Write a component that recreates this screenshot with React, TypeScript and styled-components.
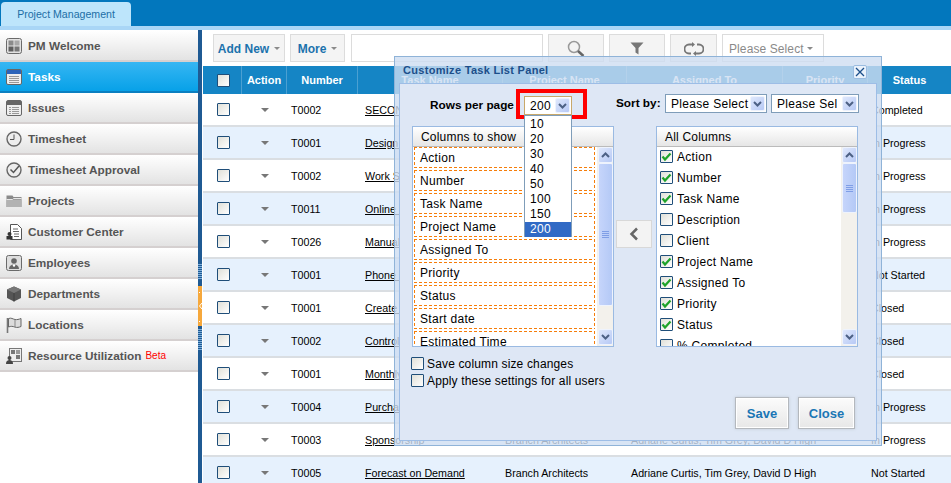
import React from "react";
import styled, { createGlobalStyle } from "styled-components";

const Global = createGlobalStyle`
  html, body { margin: 0; padding: 0; background: #fff; overflow: hidden; }
  body { font-family: "Liberation Sans", Arial, sans-serif; font-size: 11px; color: #000; }
  * { box-sizing: border-box; }
`;

const Page = styled.div`position: relative; width: 951px; height: 483px; overflow: hidden; display: flex; flex-direction: column;`;
const TopBar = styled.header`height: 30px; flex: none; background: #0277bd; border-bottom: 4px solid #a9d6f6; padding: 2px 0 0 1px;`;
const TopTab = styled.div`width: 130px; height: 24px; background: #bde5fb; border-radius: 4px 4px 0 0; color: #1c6ea6; font-size: 10.6px; display: flex; align-items: center; justify-content: center;`;
const Body = styled.div`flex: 1; display: flex; min-height: 0;`;

const Sidebar = styled.nav`width: 198px; flex: none; padding-top: 1px; display: flex; flex-direction: column;`;
const NavItem = styled.div<{ $active?: boolean }>`
  height: 31px; flex: none; display: flex; align-items: center; gap: 6px; padding: 0 0 0 6px;
  font-size: 11.8px; font-weight: bold;
  color: ${p => (p.$active ? "#fff" : "#555")};
  background: ${p => (p.$active ? "linear-gradient(#36b6f3,#07a1e8)" : "linear-gradient(#fff,#e3e3e3)")};
  border-bottom: 2px solid ${p => (p.$active ? "#0b7fc0" : "#d5d0d0")};
  svg { flex: none; }
`;
const Beta = styled.span`color: #f00; font-weight: normal; font-size: 10px; margin-left: -2px;`;

const Splitter = styled.div`width: 4px; flex: none; background: #1f5a93; display: flex; flex-direction: column; align-items: center; margin-right: 1px;`;
const SplitGrip = styled.div<{ $top: number; $h: number }>`width: 4px; height: ${p => p.$h}px; margin-top: ${p => p.$top}px; background: repeating-linear-gradient(#1f5a93 0 1px, #7fb0dc 1px 2px);`;
const SplitHandle = styled.div`width: 4px; height: 40px; margin-top: 7px; background: #f6a83c; display: flex;`;

const Main = styled.main`flex: 1; min-width: 0; display: flex; flex-direction: column;`;
const Toolbar = styled.div`height: 36px; flex: none; display: flex; padding: 4px 0 4px 10px; gap: 5px;`;
const ToolButton = styled.div<{ $w: number; $blue?: boolean }>`
  width: ${p => p.$w}px; height: 28px; flex: none; border: 1px solid #dcdcdc; background: #f4f4f4;
  display: flex; align-items: center; justify-content: center; gap: 5px; padding-top: 1px;
  font-size: 12px; font-weight: ${p => (p.$blue ? "bold" : "normal")};
  color: ${p => (p.$blue ? "#1b72ad" : "#8a8a8a")};
`;
const SearchInput = styled.div`width: 192px; height: 28px; flex: none; border: 1px solid #dcdcdc; background: #fff; margin-left: 1px;`;
const PleaseButton = styled(ToolButton)`background: #fff; justify-content: flex-start; padding-left: 6px; gap: 3px; letter-spacing: .1px;`;
const Caret = styled.i<{ $c?: string; $s?: number }>`
  display: inline-block; width: 0; height: 0; flex: none;
  border-left: ${p => p.$s ?? 4}px solid transparent; border-right: ${p => p.$s ?? 4}px solid transparent;
  border-top: ${p => p.$s ?? 4}px solid ${p => p.$c ?? "#777"};
`;

const COLS = "39px 45px 71px 145px 124px 156px 85px 83px";
const HeadRow = styled.div`height: 28px; flex: none; display: grid; grid-template-columns: ${COLS}; background: #1585c5;`;
const HeadCell = styled.div`
  display: flex; align-items: center; justify-content: center; color: #fff; font-weight: bold; font-size: 11px;
  border-right: 1px solid #4ba0d2; &:last-child { border-right: 0; }
`;
const HeadBoxCell = styled(HeadCell)`justify-content: flex-start; padding-left: 14px;`;
const Row = styled.div<{ $alt: boolean }>`
  height: 33px; flex: none; display: grid; grid-template-columns: ${COLS};
  background: ${p => (p.$alt ? "#e6f1fd" : "#fff")}; border-bottom: 2px solid #dadee2;
`;
const Cell = styled.div<{ $pad?: number; $center?: boolean; $spill?: boolean }>`
  display: flex; align-items: center; overflow: ${p => (p.$spill ? "visible" : "hidden")}; white-space: nowrap; padding-left: ${p => p.$pad ?? 0}px; font-size: 10.7px;
  justify-content: ${p => (p.$center ? "center" : "flex-start")};
`;
const TaskLink = styled.a`color: #000; text-decoration: underline;`;

const Box = styled.span`
  width: 13px; height: 13px; flex: none; display: inline-flex; align-items: center; justify-content: center;
  border: 1px solid #1f4e79; background: linear-gradient(135deg,#e0e0d8,#fff); border-radius: 1px;
`;

const Modal = styled.section`
  position: absolute; left: 394px; top: 56px; width: 488px; height: 390px;
  background: rgba(206,221,241,.8); border: 1px solid #8fb3d8; padding: 0 4px 4px;
  display: flex; flex-direction: column;
`;
const ModalTitle = styled.div`height: 26px; flex: none; padding: 7px 0 0 4px; font-size: 11px; font-weight: bold; color: #1c4f8a; letter-spacing: .3px; display: flex; align-items: flex-start; justify-content: space-between;`;
const CloseX = styled.div`width: 14px; height: 14px; margin: 1px 10px 0 0; background: #eaf2fc; border: 1px solid #9bbce0; border-radius: 2px; color: #1c4f8a; display: flex; align-items: center; justify-content: center;`;
const Panel = styled.div`flex: 1; background: #dee7f5; border: 1px solid #9dbde6; display: flex; flex-direction: column; min-height: 0;`;
const TopRow = styled.div`height: 30px; margin-top: 5px; flex: none; display: flex; align-items: flex-start;`;
const RowsLabel = styled.div`font-weight: bold; font-size: 11.8px; margin: 9px 0 0 30px; width: 86px; white-space: nowrap;`;
const RedBox = styled.div`position: relative; width: 71px; height: 30px; border: 4px solid #f00; padding: 3px 4px 0; flex: none;`;
const Select = styled.div<{ $w: number; $tan?: boolean }>`
  width: ${p => p.$w}px; height: 19px; flex: none; background: #fff;
  border: 1px solid ${p => (p.$tan ? "#c8a86a" : "#7f9db9")};
  display: flex; align-items: center; padding: 0 1px 0 5px; font-size: 12px; letter-spacing: .3px; overflow: hidden; white-space: nowrap;
`;
const SelectValue = styled.span`flex: 1; overflow: hidden;`;
const ScrollBtn = styled.span<{ $w?: number; $h?: number }>`
  width: ${p => p.$w ?? 15}px; height: ${p => p.$h ?? 15}px; flex: none; display: flex; align-items: center; justify-content: center;
  background: linear-gradient(135deg,#dfe8fc,#b7c9f5); border: 1px solid #eef3fd; border-radius: 2px;
`;
const DropList = styled.div`
  position: absolute; left: 4px; top: 22px; width: 48px; height: 122px; z-index: 3; background: #fff;
  border: 1px solid #7f9db9; font-size: 12px; letter-spacing: .3px; padding-top: 1px;
`;
const DropItem = styled.div<{ $sel?: boolean }>`
  height: 15px; line-height: 15px; padding-left: 5px;
  background: ${p => (p.$sel ? "#316ac5" : "transparent")}; color: ${p => (p.$sel ? "#fff" : "#000")};
`;
const SortLabel = styled.div`font-weight: bold; font-size: 11.8px; margin: 7px 0 0 29px; width: 49px; white-space: nowrap;`;
const SortSelects = styled.div`display: flex; gap: 4px; margin-top: 5px;`;

const Lists = styled.div`display: grid; grid-template-columns: 202px 202px; column-gap: 42px; margin: 7px 0 0 12px; height: 221px; flex: none; position: relative;`;
const ListBox = styled.div`border: 1px solid #9abae2; background: #fff; display: flex; flex-direction: column; overflow: hidden;`;
const ListHead = styled.div`height: 20px; flex: none; background: linear-gradient(#fff,#e6e6e6); border-bottom: 1px solid #bbb; font-size: 12px; letter-spacing: .2px; padding: 3px 0 0 8px; white-space: nowrap;`;
const ListBody = styled.div`flex: 1; display: flex; min-height: 0; position: relative;`;
const ListItems = styled.div`flex: 1; overflow: hidden; padding: 0 0 0 1px;`;
const H_DASH = "repeating-linear-gradient(90deg,#f57d0a 0 3px,transparent 3px 5px)";
const V_DASH = "repeating-linear-gradient(#f57d0a 0 3px,transparent 3px 5px)";
const DashItem = styled.div`
  height: 21px; width: 181px; margin-bottom: 2px; font-size: 12px; letter-spacing: .3px;
  display: flex; align-items: center; padding: 1px 0 0 6px; white-space: nowrap;
  background: ${H_DASH} 0 0 / 100% 1px no-repeat, ${H_DASH} 0 100% / 100% 1px no-repeat,
    ${V_DASH} 0 0 / 1px 100% no-repeat, ${V_DASH} 100% 0 / 1px 100% no-repeat;
`;
const CheckItem = styled.div`height: 21px; display: flex; align-items: center; gap: 4px; font-size: 12px; letter-spacing: .3px; padding-left: 3px; white-space: nowrap;`;
const CheckList = styled.div`flex: 1; overflow: hidden; margin-top: -1px;`;
const ScrollTrack = styled.div`width: 16px; flex: none; background: #f3f1ec; display: flex; flex-direction: column; justify-content: space-between; align-items: center; position: relative; padding-bottom: 1px;`;
const ScrollTop = styled.div`display: flex; flex-direction: column; align-items: center;`;
const Thumb = styled.div<{ $h: number }>`
  width: 15px; height: ${p => p.$h}px; background: linear-gradient(90deg,#c6d5fb,#b4c9f6); border: 1px solid #eef3fd; border-radius: 2px;
  display: flex; align-items: center; justify-content: center;
`;
const Grip = styled.span`width: 7px; height: 7px; background: repeating-linear-gradient(#7f9ee6 0 1px, transparent 1px 2px);`;
const MoveBtn = styled.div`position: absolute; left: 204px; top: 94px; width: 36px; height: 28px; background: #f3f3f3; border: 1px solid #d8d8d8; display: flex; align-items: center; justify-content: center;`;

const Options = styled.div`margin: 10px 0 0 11px; display: flex; flex-direction: column; gap: 4px; flex: none;`;
const Option = styled.label`display: flex; align-items: center; gap: 3px; height: 13px; font-size: 12px; letter-spacing: .15px; white-space: nowrap;`;
const Footer = styled.div`display: flex; justify-content: flex-end; gap: 11px; padding: 11px 22px 0 0;`;
const ActionBtn = styled.button<{ $w: number }>`
  width: ${p => p.$w}px; height: 30px; font: bold 13px "Liberation Sans", Arial, sans-serif; color: #1a76b5;
  background: linear-gradient(#fbfbfb,#e8e8e8); border: 1px solid #fff; box-shadow: 0 0 0 1px #b4b8bd, 0 0 3px 1px #c3cad4; padding: 0;
`;

const Chevron = ({ up }: { up?: boolean }) => (
  <svg width="9" height="6" viewBox="0 0 9 6"><path d={up ? "M1 5 4.500 1.500 8 5" : "M1 1 4.500 4.500 8 1"} fill="none" stroke="#4d6185" strokeWidth="2" /></svg>
);
const Check = () => (
  <svg width="11" height="10" viewBox="0 0 11 10"><path d="M1.500 4.500 4 7.500 9.500 1.500" fill="none" stroke="#1ea32a" strokeWidth="2.200" /></svg>
);

const I = ({ children }: { children: React.ReactNode }) => (
  <svg width="16" height="16" viewBox="0 0 16 16">{children}</svg>
);
const icons: Record<string, React.ReactNode> = {
  welcome: <I><rect x=".5" y=".5" width="15" height="15" rx="2" fill="#e2e2e2" stroke="#6a6a6a" /><rect x="2.500" y="2.500" width="5" height="5" fill="#8b8b8b" /><rect x="8.500" y="2.500" width="5" height="5" fill="#a8a8a8" /><rect x="2.500" y="8.500" width="5" height="5" fill="#5f5f5f" /><rect x="8.500" y="8.500" width="5" height="5" fill="#777" /></I>,
  tasks: <I><rect x=".5" y=".5" width="15" height="15" rx="1.500" fill="#eee" stroke="#666" /><rect x="1" y="1" width="14" height="4" fill="#2c64ba" /><path d="M3 7.500h10M3 9.500h10M3 11.500h10M3 13.500h10" stroke="#999" /></I>,
  issues: <I><rect x=".5" y=".5" width="15" height="15" rx="1.500" fill="#eee" stroke="#666" /><rect x="1" y="1" width="14" height="4" fill="#666" /><path d="M3 7.500h2M6 7.500h7M3 9.500h2M6 9.500h7M3 11.500h2M6 11.500h7M3 13.500h2M6 13.500h7" stroke="#999" /></I>,
  clock: <I><circle cx="8" cy="8" r="7" fill="#ededed" stroke="#666" strokeWidth="1.400" /><path d="M8 3.500v5H4" fill="none" stroke="#555" /></I>,
  approval: <I><circle cx="8" cy="8" r="7" fill="#ededed" stroke="#666" strokeWidth="1.400" /><path d="M4.500 7.500 7.500 10.500 13 4" fill="none" stroke="#555" strokeWidth="1.500" /></I>,
  folder: <I><path d="M.5 2.500h6l1 1.500h8v10H.5z" fill="#8a8a8a" /><path d="M.5 6.500h15v7.500H.5z" fill="#b2b2b2" /><path d="M.5 6.500h6l1-1h8" fill="none" stroke="#e6e6e6" /></I>,
  customer: <I><path d="M4.500.5h7l4 4v11h-11z" fill="#fff" stroke="#555" /><path d="M7 5h5M7 7.500h6M8 10h5M8 12.500h5" stroke="#666" /><circle cx="3.500" cy="10" r="2" fill="#333" /><rect x=".5" y="12" width="6" height="3.500" fill="#333" /></I>,
  employees: <I><rect x=".5" y=".5" width="15" height="15" rx="2" fill="#dedede" stroke="#6a6a6a" /><circle cx="8" cy="6" r="2.800" fill="#666" /><path d="M3 14c0-3 2-4.500 5-4.500s5 1.500 5 4.500z" fill="#666" /><circle cx="8" cy="10.500" r="1.200" fill="#fff" /></I>,
  dept: <I><path d="M8 .5 15 3.500v8.500L8 15.500 1 12V3.500z" fill="#555" /><path d="M1 3.500 8 7l7-3.500L8 .5z" fill="#777" /><path d="M8 7v8.500" stroke="#3f3f3f" /></I>,
  flag: <I><path d="M1.500 1v15" stroke="#777" strokeWidth="1.600" /><path d="M2.500 1.500c3-1 4 .5 6.500 1 2 .4 4-.2 6-1v8c-2 .8-4 1.300-6 .6C6.500 9.200 5 9 2.500 10z" fill="#dcdcdc" stroke="#666" /><path d="M9 2.500V10" stroke="#888" /></I>,
  resource: <I><rect x="3.500" y=".5" width="12" height="13" fill="#eee" stroke="#777" /><rect x="5" y="2" width="4" height="4" fill="#777" /><rect x="10" y="2" width="4" height="4" fill="#999" /><rect x="10" y="7" width="4" height="4" fill="#777" /><circle cx="3.500" cy="10" r="2" fill="#444" /><path d="M0 16c0-3 1.500-4 3.500-4s3.500 1 3.500 4z" fill="#444" /></I>,
};

const nav: [string, string][] = [
  ["welcome", "PM Welcome"], ["tasks", "Tasks"], ["issues", "Issues"], ["clock", "Timesheet"], ["approval", "Timesheet Approval"],
  ["folder", "Projects"], ["customer", "Customer Center"], ["employees", "Employees"], ["dept", "Departments"], ["flag", "Locations"], ["resource", "Resource Utilization"],
];
const rows: [string, string, string][] = [
  ["T0002", "SECOND Project", "Completed"], ["T0001", "Design Review", "In Progress"], ["T0002", "Work Schedule", "In Progress"],
  ["T0011", "Online Marketing", "In Progress"], ["T0026", "Manual Update", "In Progress"], ["T0001", "Phone Support", "Not Started"],
  ["T0001", "Create Report", "Closed"], ["T0002", "Control Budget", "Closed"], ["T0001", "Monthly Report", "Closed"],
  ["T0004", "Purchase Order", "In Progress"], ["T0003", "Sponsorship", "In Progress"], ["T0005", "Forecast on Demand", "Not Started"],
];
const heads = ["Action", "Number", "Task Name", "Project Name", "Assigned To", "Priority", "Status"];
const showCols = ["Action", "Number", "Task Name", "Project Name", "Assigned To", "Priority", "Status", "Start date", "Estimated Time"];
const allCols: [string, boolean][] = [
  ["Action", true], ["Number", true], ["Task Name", true], ["Description", false], ["Client", false], ["Project Name", true],
  ["Assigned To", true], ["Priority", true], ["Status", true], ["% Completed", false],
];

const Scrollbar = ({ thumb, grip }: { thumb: number; grip?: boolean }) => (
  <ScrollTrack>
    <ScrollTop>
      <ScrollBtn $h={16}><Chevron up /></ScrollBtn>
      <Thumb $h={thumb}>{grip && <Grip />}</Thumb>
    </ScrollTop>
    <ScrollBtn $h={16}><Chevron /></ScrollBtn>
  </ScrollTrack>
);

export default function App() {
  return (
    <Page>
      <Global />
      <TopBar><TopTab>Project Management</TopTab></TopBar>
      <Body>
        <Sidebar>
          {nav.map(([ic, label]) => (
            <NavItem key={label} $active={label === "Tasks"}>
              {icons[ic]}
              <span>{label}</span>
              {label === "Resource Utilization" && <Beta>Beta</Beta>}
            </NavItem>
          ))}
        </Sidebar>
        <Splitter>
          <SplitGrip $top={233} $h={16} />
          <SplitHandle>
            <svg width="4" height="40" viewBox="0 0 4 40"><rect x="1" y="6" width="1" height="1" fill="#fff" /><path d="M4 17 1.500 20 4 23" fill="none" stroke="#fff" /><rect x="1" y="35" width="1" height="1" fill="#fff" /></svg>
          </SplitHandle>
          <SplitGrip $top={2} $h={22} />
        </Splitter>
        <Main>
          <Toolbar>
            <ToolButton $w={72} $blue>Add New <Caret $c="#8a8a8a" $s={3} /></ToolButton>
            <ToolButton $w={55} $blue>More <Caret $c="#8a8a8a" $s={3} /></ToolButton>
            <SearchInput />
            <ToolButton $w={56}>
              <svg width="20" height="20" viewBox="0 0 20 20"><circle cx="8" cy="8" r="5.500" fill="none" stroke="#999" strokeWidth="1.500" /><path d="M12 12l5.500 5" stroke="#666" strokeWidth="2.500" /></svg>
            </ToolButton>
            <ToolButton $w={56}>
              <svg width="14" height="13" viewBox="0 0 14 13"><path d="M.5.500h13L8.500 6v6.500L5.500 10.500V6z" fill="#777" /></svg>
            </ToolButton>
            <ToolButton $w={47}>
              <svg width="20" height="14" viewBox="0 0 20 14"><path d="M8 2.500H5a4.500 4.500 0 0 0 0 9h2M12 11.500h3a4.500 4.500 0 0 0 0-9h-2" fill="none" stroke="#777" strokeWidth="1.800" /><path d="M8 0v5l3-2.500zM12 9v5l-3-2.500z" fill="#777" /></svg>
            </ToolButton>
            <PleaseButton $w={102}>Please Select <Caret $c="#8a8a8a" $s={3} /></PleaseButton>
          </Toolbar>
          <HeadRow>
            <HeadBoxCell><Box /></HeadBoxCell>
            {heads.map(h => <HeadCell key={h}>{h}</HeadCell>)}
          </HeadRow>
          {rows.map(([num, task, status], i) => (
            <Row key={i} $alt={i % 2 === 1}>
              <Cell $pad={14}><Box /></Cell>
              <Cell $center><Caret $s={4} /></Cell>
              <Cell $pad={4}>{num}</Cell>
              <Cell $pad={7}><TaskLink>{task}</TaskLink></Cell>
              <Cell $pad={2}>Branch Architects</Cell>
              <Cell $pad={4} $spill>Adriane Curtis, Tim Grey, David D High</Cell>
              <Cell />
              <Cell $pad={3}>{status}</Cell>
            </Row>
          ))}
        </Main>
      </Body>

      <Modal>
        <ModalTitle>
          Customize Task List Panel
          <CloseX>
            <svg width="10" height="10" viewBox="0 0 10 10"><path d="M1 1l8 8M9 1l-8 8" stroke="#1c4f8a" strokeWidth="1.300" /></svg>
          </CloseX>
        </ModalTitle>
        <Panel>
          <TopRow>
            <RowsLabel>Rows per page</RowsLabel>
            <RedBox>
              <Select $w={48} $tan>
                <SelectValue>200</SelectValue>
                <ScrollBtn $w={15} $h={15}><Chevron /></ScrollBtn>
              </Select>
              <DropList>
                {["10", "20", "30", "40", "50", "100", "150", "200"].map(v => (
                  <DropItem key={v} $sel={v === "200"}>{v}</DropItem>
                ))}
              </DropList>
            </RedBox>
            <SortLabel>Sort by:</SortLabel>
            <SortSelects>
              <Select $w={102}><SelectValue>Please Select</SelectValue><ScrollBtn $w={15} $h={15}><Chevron /></ScrollBtn></Select>
              <Select $w={88}><SelectValue>Please Sel</SelectValue><ScrollBtn $w={15} $h={15}><Chevron /></ScrollBtn></Select>
            </SortSelects>
          </TopRow>
          <Lists>
            <ListBox>
              <ListHead>Columns to show</ListHead>
              <ListBody>
                <ListItems>{showCols.map(c => <DashItem key={c}>{c}</DashItem>)}</ListItems>
                <Scrollbar thumb={143} grip />
              </ListBody>
            </ListBox>
            <MoveBtn>
              <svg width="10" height="14" viewBox="0 0 10 14"><path d="M8 1.500 2.500 7 8 12.500" fill="none" stroke="#666" strokeWidth="2.500" /></svg>
            </MoveBtn>
            <ListBox>
              <ListHead>All Columns</ListHead>
              <ListBody>
                <CheckList>
                  {allCols.map(([c, on]) => (
                    <CheckItem key={c}><Box>{on && <Check />}</Box>{c}</CheckItem>
                  ))}
                </CheckList>
                <Scrollbar thumb={50} grip />
              </ListBody>
            </ListBox>
          </Lists>
          <Options>
            <Option><Box />Save column size changes</Option>
            <Option><Box />Apply these settings for all users</Option>
          </Options>
          <Footer>
            <ActionBtn $w={52}>Save</ActionBtn>
            <ActionBtn $w={55}>Close</ActionBtn>
          </Footer>
        </Panel>
      </Modal>
    </Page>
  );
}
